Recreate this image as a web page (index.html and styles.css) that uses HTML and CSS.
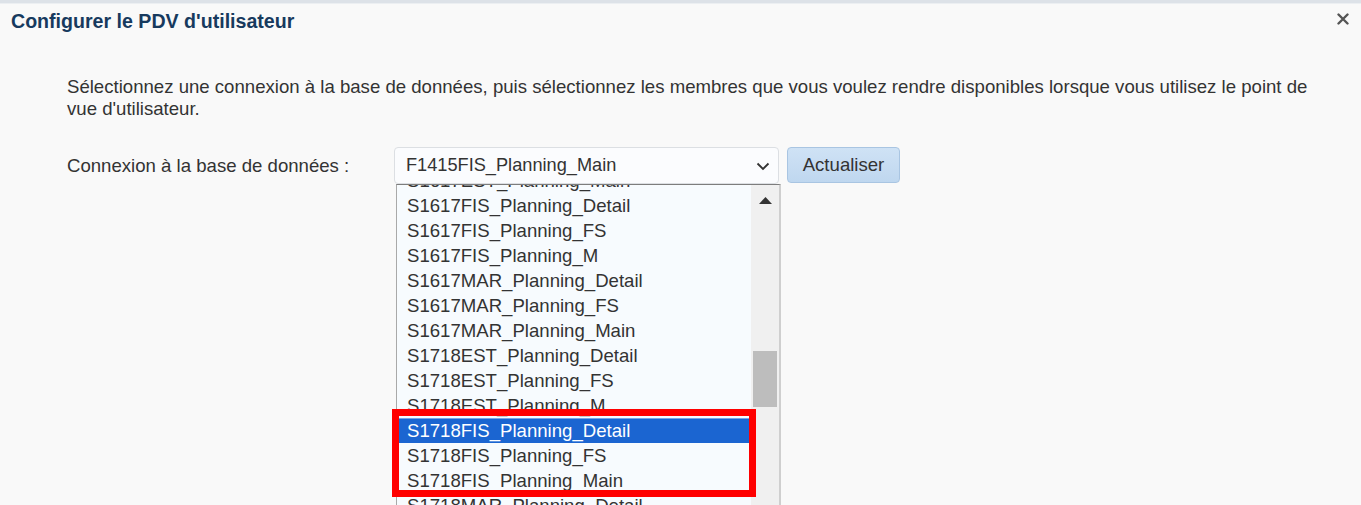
FILE: index.html
```html
<!DOCTYPE html>
<html lang="fr">
<head>
<meta charset="utf-8">
<title>Configurer le PDV d'utilisateur</title>
<link rel="stylesheet" href="styles.css">
</head>
<body>
<div class="topbar"></div>
<div class="dialog">
  <div class="header">
    <h1 class="title">Configurer le PDV d'utilisateur</h1>
    <span class="close" aria-label="Fermer">
      <svg width="12" height="12" viewBox="0 0 12 12"><path d="M1.5 1.5 L10.5 10.5 M10.5 1.5 L1.5 10.5" stroke="#555" stroke-width="2.4" stroke-linecap="round"/></svg>
    </span>
  </div>
  <div class="content">
    <p class="desc">Sélectionnez une connexion à la base de données, puis sélectionnez les membres que vous voulez rendre disponibles lorsque vous utilisez le point de vue d'utilisateur.</p>
    <div class="row">
      <label class="label">Connexion à la base de données :</label>
      <div class="combo">
        <div class="select">
          <span>F1415FIS_Planning_Main</span>
          <svg class="chev" width="14" height="9" viewBox="0 0 14 9"><path d="M1.5 1.5 L7 7 L12.5 1.5" fill="none" stroke="#333" stroke-width="1.8"/></svg>
        </div>
        <div class="list">
          <div class="items">
            <div class="item">S1617EST_Planning_Main</div>
            <div class="item">S1617FIS_Planning_Detail</div>
            <div class="item">S1617FIS_Planning_FS</div>
            <div class="item">S1617FIS_Planning_M</div>
            <div class="item">S1617MAR_Planning_Detail</div>
            <div class="item">S1617MAR_Planning_FS</div>
            <div class="item">S1617MAR_Planning_Main</div>
            <div class="item">S1718EST_Planning_Detail</div>
            <div class="item">S1718EST_Planning_FS</div>
            <div class="item">S1718EST_Planning_M</div>
            <div class="item selected">S1718FIS_Planning_Detail</div>
            <div class="item">S1718FIS_Planning_FS</div>
            <div class="item">S1718FIS_Planning_Main</div>
            <div class="item">S1718MAR_Planning_Detail</div>
          </div>
          <div class="scrollbar">
            <svg class="arrow" width="13" height="7" viewBox="0 0 13 7"><path d="M0 7 L6.5 0 L13 7 Z" fill="#333"/></svg>
            <div class="thumb"></div>
          </div>
        </div>
        <div class="highlight"></div>
      </div>
      <button class="btn">Actualiser</button>
    </div>
  </div>
</div>
</body>
</html>
```

FILE: styles.css
```css
html, body {
  margin: 0;
  padding: 0;
  height: 100%;
  overflow: hidden;
}
body {
  background: #f9f9f9;
  font-family: "Liberation Sans", Arial, sans-serif;
  color: #333;
}
.topbar {
  height: 3px;
  background: #dde2e8;
  border-bottom: 1px solid #eceff2;
}
.header {
  display: flex;
  justify-content: space-between;
  align-items: center;
  padding: 5px 12px 0 11px;
  height: 24px;
}
.title {
  margin: 0;
  font-size: 19.6px;
  line-height: 24px;
  font-weight: bold;
  color: #173a5e;
}
.close {
  display: flex;
  align-self: flex-start;
  margin-top: 4px;
}
.content {
  padding: 43px 0 0 67px;
}
.desc {
  margin: 0;
  width: 1250px;
  font-size: 18.6px;
  line-height: 22px;
  color: #333;
}
.row {
  display: flex;
  align-items: flex-start;
  margin-top: 27px;
}
.label {
  width: 327px;
  font-size: 18.6px;
  line-height: 37px;
  color: #333;
}
.combo {
  position: relative;
  display: flex;
  flex-direction: column;
  width: 386px;
}
.select {
  box-sizing: border-box;
  height: 37px;
  width: 385px;
  border: 1px solid #dcdfe3;
  border-radius: 4px;
  background: #fbfcfe;
  display: flex;
  align-items: center;
  justify-content: space-between;
  padding: 0 8px 0 11px;
  font-size: 18.2px;
  color: #333;
}
.chev {
  margin-top: 1px;
}
.list {
  box-sizing: border-box;
  margin-left: 2px;
  width: 385px;
  height: 330px;
  border-top: 1px solid #7d7d7d;
  border-left: 1px solid #a9a9a9;
  border-right: 2px solid #cfcfcf;
  background: #f7fbfe;
  display: flex;
  overflow: hidden;
}
.items {
  flex: 1;
  margin-top: -17px;
}
.item {
  height: 25px;
  line-height: 25px;
  padding-left: 10px;
  font-size: 18.6px;
  color: #333;
  white-space: nowrap;
}
.item.selected {
  background: #1b65d1;
  color: #fff;
  box-shadow: inset 0 1px 0 #7aa6e6;
}
.scrollbar {
  width: 28px;
  background: #f0f0f0;
  display: flex;
  flex-direction: column;
  align-items: center;
}
.arrow {
  margin-top: 12px;
}
.thumb {
  margin-top: 147px;
  width: 24px;
  height: 56px;
  background: #bdbdbd;
}
.highlight {
  position: absolute;
  left: -2px;
  top: 262px;
  width: 364px;
  height: 88px;
  box-sizing: border-box;
  border: 7px solid #ff0000;
}
.btn {
  margin-left: 7px;
  height: 36px;
  width: 113px;
  border: 1px solid #a9c5e2;
  border-radius: 4px;
  background: linear-gradient(#cfe2f5, #bfd7ef);
  font-family: "Liberation Sans", Arial, sans-serif;
  font-size: 18.6px;
  color: #333;
  padding: 0;
}
```
